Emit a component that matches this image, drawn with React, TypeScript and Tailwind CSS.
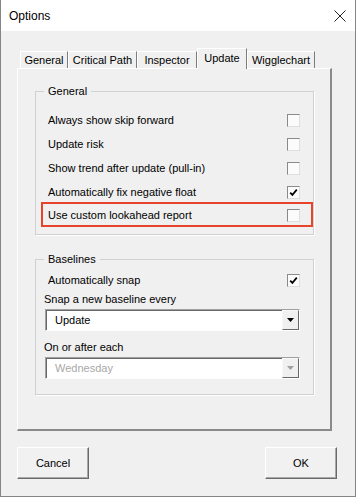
import React from 'react';

const tabs = [
  { label: 'General', width: 'w-[48px]' },
  { label: 'Critical Path', width: 'w-[69px]' },
  { label: 'Inspector', width: 'w-[60px]' },
  { label: 'Update', width: 'w-[50px]', active: true },
  { label: 'Wigglechart', width: 'w-[68px]' }
];

const generalRows = [
  { label: 'Always show skip forward', checked: false },
  { label: 'Update risk', checked: false },
  { label: 'Show trend after update (pull-in)', checked: false },
  { label: 'Automatically fix negative float', checked: true }
];

// classic sunken checkbox
const CheckBox: React.FC<{ checked?: boolean }> = ({ checked = false }) => (
  <span className="flex w-[13px] h-[13px] shrink-0 items-center justify-center border border-t-[#8a8a8a] border-l-[#8a8a8a] border-b-[#dedede] border-r-[#dedede] bg-[#fbfbfb]">
    {checked && (
      <svg width="9" height="9" viewBox="0 0 9 9">
        <path d="M1.2 4.6 L3.4 6.9 L7.8 1.6" stroke="#000" strokeWidth="1.7" fill="none" />
      </svg>
    )}
  </span>
);

const Dropdown: React.FC<{ value: string; disabled?: boolean }> = ({ value, disabled = false }) => (
  <div className="ml-[9px] flex h-[22px] w-[255px] bg-white border border-t-[#a0a0a0] border-l-[#a0a0a0] border-b-white border-r-white shadow-[inset_1px_1px_0_#696969]">
    <span className={`flex-1 pl-[9px] pt-[1px] leading-[19px] ${disabled ? 'text-[#a8a8a8]' : 'text-black'}`}>
      {value}
    </span>
    <span className="flex w-[17px] h-full items-center justify-center bg-[#f0f0f0] border border-t-[#f8f8f8] border-l-[#f8f8f8] border-b-[#696969] border-r-[#696969]">
      <svg width="7" height="4" viewBox="0 0 7 4">
        <path d="M0 0 H7 L3.5 4 Z" fill={disabled ? '#a0a0a0' : '#000'} />
      </svg>
    </span>
  </div>
);

const GroupBox: React.FC<{ title: string; className?: string; children: React.ReactNode }> = ({
  title,
  className = '',
  children
}) => (
  <div className={`relative w-[279px] border border-[#d0d0d0] shadow-[1px_1px_0_#ffffff] ${className}`}>
    <span className="absolute -top-[8px] left-[8px] bg-[#f0f0f0] px-[4px] leading-[14px]">{title}</span>
    {children}
  </div>
);

const DialogButton: React.FC<{ label: string }> = ({ label }) => (
  <button
    type="button"
    className="flex w-[72px] h-[32px] items-center justify-center bg-[#f1f1f1] border border-t-white border-l-white border-b-[#6a6a6a] border-r-[#6a6a6a] shadow-[inset_-1px_-1px_0_#a8a8a8]"
  >
    {label}
  </button>
);

export default function App() {
  return (
    <div className="flex w-[356px] h-[497px] flex-col border-x border-b border-[#858585] bg-[#f0f0f0] text-[11px] text-black font-['Liberation_Sans',Arial,sans-serif]">
      {/* title bar */}
      <div className="flex h-[31px] shrink-0 items-center justify-between bg-white pl-[8px] pr-[9px]">
        <span className="text-[12px]">Options</span>
        <svg width="12" height="12" viewBox="0 0 12 12">
          <path d="M0.5 0.5 L11.5 11.5 M11.5 0.5 L0.5 11.5" stroke="#222" strokeWidth="1" />
        </svg>
      </div>

      <div className="flex flex-1 flex-col pl-[16px] pt-[17px]">
        {/* tab strip */}
        <div className="flex h-[20px] items-end pl-[3px]">
          {tabs.map((tab) =>
            tab.active ? (
              <div
                key={tab.label}
                className={`${tab.width} relative z-10 -mb-px flex h-[21px] items-start justify-center border-t border-l border-t-white border-l-white border-r border-r-[#7c7c7c] bg-[#f0f0f0] pt-[1px]`}
              >
                {tab.label}
              </div>
            ) : (
              <div
                key={tab.label}
                className={`${tab.width} flex h-[17px] items-center justify-center border-t border-l border-t-white border-l-white border-r border-r-[#7c7c7c]`}
              >
                {tab.label}
              </div>
            )
          )}
        </div>

        {/* tab panel */}
        <div className="flex w-[315px] h-[363px] flex-col border-t border-l border-t-white border-l-white border-b-2 border-r-2 border-b-[#8a8a8a] border-r-[#8a8a8a] pl-[17px] pt-[22px]">
          <GroupBox title="General" className="h-[144px] pt-[16px]">
            {generalRows.map((row) => (
              <div key={row.label} className="flex h-[24px] items-center justify-between pl-[12px] pr-[13px]">
                <span>{row.label}</span>
                <CheckBox checked={row.checked} />
              </div>
            ))}
            <div className="-mt-[2px] ml-[5px] flex h-[25px] items-center justify-between border-2 border-[#e8442b] pl-[5px] pr-[11px] pt-[1px]">
              <span>Use custom lookahead report</span>
              <CheckBox />
            </div>
          </GroupBox>

          <GroupBox title="Baselines" className="mt-[24px] h-[136px] pt-[10px]">
            <div className="flex h-[20px] items-center justify-between pl-[12px] pr-[13px]">
              <span>Automatically snap</span>
              <CheckBox checked />
            </div>
            <div className="flex h-[18px] items-center pl-[8px]">Snap a new baseline every</div>
            <div className="mt-[1px]">
              <Dropdown value="Update" />
            </div>
            <div className="mt-[7px] flex h-[18px] items-center pl-[8px]">On or after each</div>
            <div className="mt-[1px]">
              <Dropdown value="Wednesday" disabled />
            </div>
          </GroupBox>
        </div>

        {/* buttons */}
        <div className="mt-[16px] flex w-[320px] justify-between">
          <DialogButton label="Cancel" />
          <DialogButton label="OK" />
        </div>
      </div>
    </div>
  );
}
